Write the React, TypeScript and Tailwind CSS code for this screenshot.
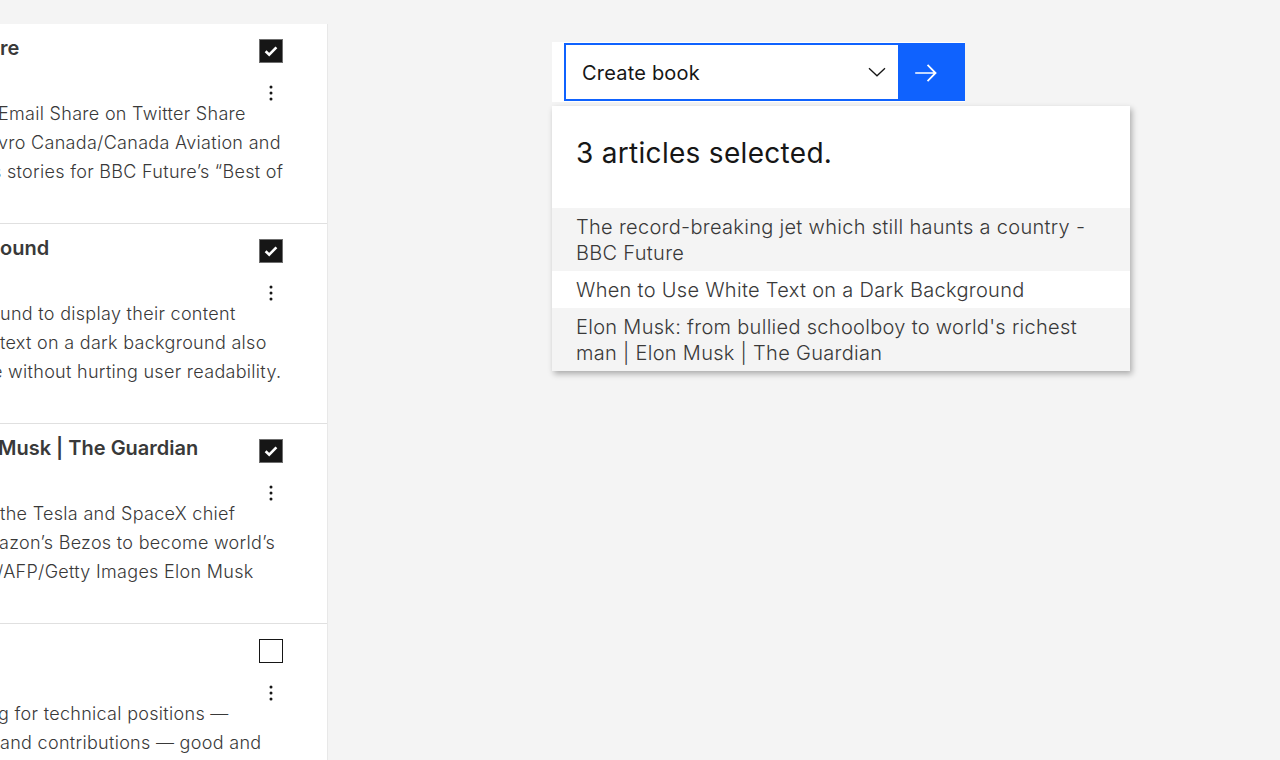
import { useState } from "react";

type Line = { text: string; shift?: string };
type Card = { title: string; titleShift?: string; checked: boolean; lines: Line[] };

const cards: Card[] = [
  {
    title: "re",
    checked: true,
    lines: [
      { text: "Email Share on Twitter Share", shift: "-ml-[2px]" },
      { text: "vro Canada/Canada Aviation and", shift: "-ml-[2px]" },
      { text: "s stories for BBC Future’s “Best of", shift: "-ml-[8px]" },
    ],
  },
  {
    title: "ound",
    checked: true,
    lines: [
      { text: "und to display their content" },
      { text: "text on a dark background also" },
      { text: "e without hurting user readability.", shift: "-ml-[8px]" },
    ],
  },
  {
    title: "Musk | The Guardian",
    titleShift: "-ml-[2px]",
    checked: true,
    lines: [
      { text: "the Tesla and SpaceX chief" },
      { text: "azon’s Bezos to become world’s", shift: "-ml-[1px]" },
      { text: "/AFP/Getty Images Elon Musk", shift: "-ml-[3px]" },
    ],
  },
  {
    title: "",
    checked: false,
    lines: [
      { text: "g for technical positions —", shift: "-ml-[2px]" },
      { text: "and contributions — good and" },
      { text: "" },
    ],
  },
];

const selected = [
  "The record-breaking jet which still haunts a country - BBC Future",
  "When to Use White Text on a Dark Background",
  "Elon Musk: from bullied schoolboy to world's richest man | Elon Musk | The Guardian",
];

function Checkbox({ checked }: { checked: boolean }) {
  return (
    <div
      className={
        checked
          ? "w-[24px] h-[24px] bg-[#161616] border border-[#6f6f6f] flex items-center justify-center"
          : "w-[24px] h-[24px] bg-white border border-[#161616]"
      }
    >
      {checked && (
        <svg width="16" height="16" viewBox="0 0 16 16">
          <path d="M2.6 8.2 L6.2 11.6 L13.4 4.4" fill="none" stroke="white" strokeWidth="2.6" />
        </svg>
      )}
    </div>
  );
}

function Kebab() {
  return (
    <svg width="4" height="18" viewBox="0 0 4 18">
      <circle cx="2" cy="3" r="1.5" fill="#161616" />
      <circle cx="2" cy="9" r="1.5" fill="#161616" />
      <circle cx="2" cy="15" r="1.5" fill="#161616" />
    </svg>
  );
}

const App = () => {
  const [action] = useState("Create book");

  return (
    <div
      className="w-[1280px] h-[760px] overflow-hidden bg-[#f4f4f4] flex"
      style={{ fontFamily: "Inter, 'Noto Sans', sans-serif" }}
    >
      {/* article list, scrolled sideways */}
      <div className="w-[328px] mt-[24px] bg-white overflow-hidden border-r border-[#e8e8e8] shrink-0">
        {cards.map((card, i) => (
          <div key={i} className="h-[200px] border-b border-[#e0e0e0] pt-[15px]">
            <div className="flex justify-between items-start pr-[44px]">
              <div
                className={`text-[20px] leading-7 font-semibold text-[#393939] whitespace-nowrap -mt-[5px] ${card.titleShift ?? ""}`}
              >
                {card.title}
              </div>
              <Checkbox checked={card.checked} />
            </div>
            <div className="flex justify-end pr-[54px] mt-[21px]">
              <Kebab />
            </div>
            <div className="-mt-[3px] text-[18px] leading-[29px] font-light tracking-[0.3px] text-[#393939]">
              {card.lines.map((l, j) => (
                <div key={j} className={`whitespace-nowrap h-[29px] ${l.shift ?? ""}`}>
                  {l.text}
                </div>
              ))}
            </div>
          </div>
        ))}
      </div>

      {/* action + selection summary */}
      <div className="pl-[224px] pt-[42px]">
        <div className="flex bg-white pl-3 py-px w-[413px]">
          <div className="w-[336px] h-[58px] border-2 border-[#0f62fe] bg-white flex items-center justify-between pl-4 pr-[12px] pt-[2px]">
            <span className="text-[20px] text-[#161616] tracking-[0.2px]">{action}</span>
            <svg width="18" height="10" viewBox="0 0 18 10" className="mb-[2px]">
              <path d="M1 1.2 L9 8.8 L17 1.2" fill="none" stroke="#161616" strokeWidth="1.3" />
            </svg>
          </div>
          <button className="w-[65px] h-[58px] bg-[#0f62fe] flex items-center justify-start pl-[14px] pt-[2px]">
            <svg width="24" height="24" viewBox="0 0 20 20">
              <path d="M11.8 2.8L10.8 3.8 16.2 9.3 1 9.3 1 10.7 16.2 10.7 10.8 16.2 11.8 17.2 19 10z" fill="white" />
            </svg>
          </button>
        </div>

        <div className="mt-[4px] w-[578px] bg-white shadow-[2px_3px_6px_rgba(0,0,0,0.3)]">
          <div className="h-[102px] px-6 pt-[29px] text-[28px] leading-9 tracking-[0.3px] text-[#161616]">
            3 articles selected.
          </div>
          {selected.map((t, i) => (
            <div
              key={i}
              className={`px-6 pt-[6px] pb-[5px] text-[20px] leading-[26px] font-light tracking-[0.3px] text-[#393939] ${
                i % 2 === 0 ? "bg-[#f4f4f4]" : "bg-white"
              }`}
            >
              {t}
            </div>
          ))}
        </div>
      </div>
    </div>
  );
};

export default App;
